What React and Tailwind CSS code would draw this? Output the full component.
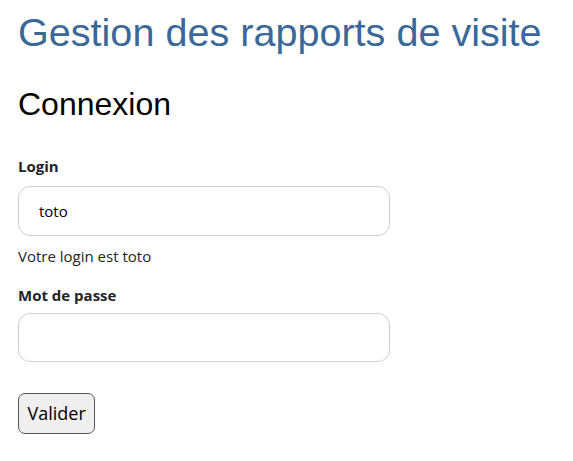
export default function App() {
  return (
    <div className="min-h-screen bg-white px-[18px]">
      <h1 className="pt-[8px] font-['Liberation_Sans',Arial,sans-serif] text-[39.6px] leading-[48px] text-[#3a6898]">
        Gestion des rapports de visite
      </h1>
      <h2 className="mt-[29px] font-['Liberation_Sans',Arial,sans-serif] text-[32px] leading-[38px] text-black">
        Connexion
      </h2>

      <form className="mt-[32px] font-['Open_Sans',sans-serif] text-[15px] text-[#212529]">
        <label className="block font-bold leading-[22px]">Login</label>
        <input
          type="text"
          defaultValue="toto"
          className="mt-[9px] block h-[50px] w-[372px] rounded-[12px] border border-[#cfcfcf] px-[20px] text-[15px] text-black outline-none"
        />
        <p className="mt-[9px] leading-[22px]">Votre login est toto</p>

        <label className="mt-[17px] block font-bold leading-[22px]">Mot de passe</label>
        <input
          type="password"
          className="mt-[7px] block h-[49px] w-[372px] rounded-[12px] border border-[#cfcfcf] px-[20px] outline-none"
        />

        <button
          type="submit"
          className="mt-[31px] h-[41px] rounded-[7px] border border-[#555] bg-[#efefef] px-[8.5px] text-[18px] text-black"
        >
          Valider
        </button>
      </form>
    </div>
  )
}
